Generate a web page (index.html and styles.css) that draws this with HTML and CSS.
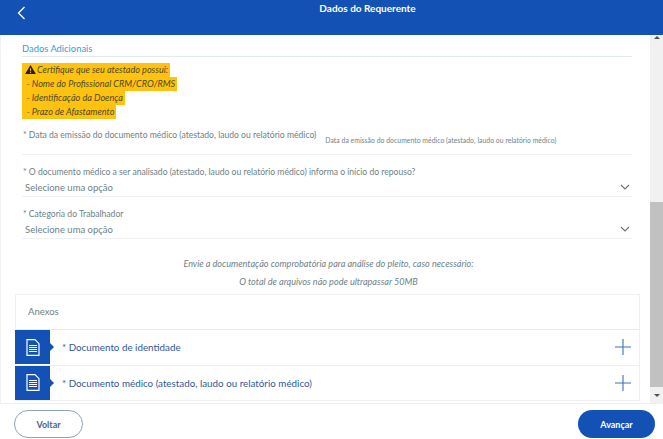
FILE: index.html
```html
<!DOCTYPE html>
<html lang="pt-BR">
<head>
<meta charset="utf-8">
<title>Dados do Requerente</title>
<link rel="stylesheet" href="styles.css">
</head>
<body>
<div class="app">
  <header class="topbar">
    <svg class="back" width="12" height="16" viewBox="0 0 12 16"><path d="M9.500 2 L3.500 8 L9.500 14" fill="none" stroke="#fff" stroke-width="1.300"/></svg>
    <h1 class="title">Dados do Requerente</h1>
  </header>
  <div class="middle">
    <main class="content">
      <div class="form">
        <h2 class="section">Dados Adicionais</h2>
        <div class="notice">
          <p class="line head-line"><svg class="warn" width="11" height="9" viewBox="0 0 12 10"><path d="M6 0 L12 10 L0 10 Z" fill="#222"/><rect x="5.500" y="3.500" width="1" height="3.500" fill="#ffc20e"/><rect x="5.500" y="7.800" width="1" height="1.100" fill="#ffc20e"/></svg>Certifique que seu atestado possui:</p>
          <p class="line">- Nome do Profissional CRM/CRO/RMS</p>
          <p class="line">- Identificação da Doença</p>
          <p class="line">- Prazo de Afastamento</p>
        </div>
        <div class="date-field">
          <span class="label">* Data da emissão do documento médico (atestado, laudo ou relatório médico)</span>
          <span class="hint">Data da emissão do documento médico (atestado, laudo ou relatório médico)</span>
        </div>
        <div class="select-field">
          <div class="label">* O documento médico a ser analisado (atestado, laudo ou relatório médico) informa o início do repouso?</div>
          <div class="select">Selecione uma opção
            <svg class="chev" width="10" height="6" viewBox="0 0 10 6"><path d="M1 1 L5 5 L9 1" fill="none" stroke="#66757c" stroke-width="1.100"/></svg>
          </div>
        </div>
        <div class="select-field">
          <div class="label">* Categoria do Trabalhador</div>
          <div class="select">Selecione uma opção
            <svg class="chev" width="10" height="6" viewBox="0 0 10 6"><path d="M1 1 L5 5 L9 1" fill="none" stroke="#66757c" stroke-width="1.100"/></svg>
          </div>
        </div>
      </div>
      <div class="info">
        <p>Envie a documentação comprobatória para análise do pleito, caso necessário:</p>
        <p>O total de arquivos não pode ultrapassar 50MB</p>
      </div>
      <section class="attachments">
        <div class="att-head">Anexos</div>
        <div class="att-row tall">
          <div class="att-icon">
            <svg width="14" height="17" viewBox="0 0 14 17"><path d="M1 .7 H9 L13 4.700 V16.300 H1 Z" fill="none" stroke="#fff" stroke-width="1.200"/><path d="M3 6.500 H11 M3 8.500 H11 M3 10.500 H11 M3 12.500 H11" stroke="#fff" stroke-width="1"/></svg>
          </div>
          <span class="att-name">* Documento de identidade</span>
          <svg class="plus" width="16" height="16" viewBox="0 0 16 16"><path d="M8 0 V16 M0 8 H16" stroke="#3f6fbe" stroke-width="1.100"/></svg>
        </div>
        <div class="att-row">
          <div class="att-icon">
            <svg width="14" height="17" viewBox="0 0 14 17"><path d="M1 .7 H9 L13 4.700 V16.300 H1 Z" fill="none" stroke="#fff" stroke-width="1.200"/><path d="M3 6.500 H11 M3 8.500 H11 M3 10.500 H11 M3 12.500 H11" stroke="#fff" stroke-width="1"/></svg>
          </div>
          <span class="att-name">* Documento médico (atestado, laudo ou relatório médico)</span>
          <svg class="plus" width="16" height="16" viewBox="0 0 16 16"><path d="M8 0 V16 M0 8 H16" stroke="#3f6fbe" stroke-width="1.100"/></svg>
        </div>
      </section>
    </main>
    <div class="scrollbar">
      <div class="arrow"><span class="tri up"></span></div>
      <div class="track"></div>
      <div class="thumb"></div>
      <div class="arrow"><span class="tri down"></span></div>
    </div>
  </div>
  <footer class="footer">
    <button class="btn ghost">Voltar</button>
    <button class="btn solid">Avançar</button>
  </footer>
</div>
</body>
</html>
```
FILE: styles.css
```css
* { box-sizing: border-box; }
html, body { margin: 0; padding: 0; height: 100%; overflow: hidden; background: #fff; }
body { font-family: Lato, "Open Sans", sans-serif; color: #6d7f85; }
.app { display: flex; flex-direction: column; height: 439px; }

.topbar { height: 35px; flex: none; background: #1351b4; position: relative; display: flex; justify-content: center; padding-left: 72px; }
.back { position: absolute; left: 15px; top: 5px; }
.title { margin: 1px 0 0; font-size: 10px; font-weight: 700; line-height: 14px; color: #fff; }

.middle { flex: 1; display: flex; min-height: 0; }
.content { flex: 1; min-width: 0; padding: 0 10px 0 5px; overflow: hidden; box-shadow: inset 1px 0 0 #f2f2f2; }

.form { padding: 0 8px 0 17px; }
.section { margin: 0; padding-top: 7px; height: 21.500px; font-size: 9.400px; line-height: 13px; font-weight: 400; color: #2f9fd0; border-bottom: 1px solid #e3ebef; }
.notice { margin-top: 6px; display: flex; flex-direction: column; align-items: flex-start; }
.line { margin: 0; padding: 0 2px 0 4.500px; background: #ffc20e; font-size: 9.100px; line-height: 14px; font-style: italic; color: #4d4a2a; white-space: nowrap; }
.head-line { padding-left: 3px; padding-right: 2px; }
.warn { margin: 0 1px -1px 0; }

.date-field { display: flex; align-items: flex-start; margin-top: 8px; height: 28px; border-bottom: 1px solid #eef1f2; white-space: nowrap; }
.date-field .label { padding-top: 2px; }
.hint { font-size: 6.800px; line-height: 11px; margin: 8px 0 0 9px; letter-spacing: .05px; color: #71838a; }

.select-field { margin-top: 11px; }
.label { font-size: 8.600px; line-height: 12px; white-space: nowrap; padding-left: 1px; }
.select { display: flex; justify-content: space-between; align-items: center; height: 17px; padding: 0 2px 1px 3px; font-size: 9.500px; border-bottom: 1px solid #eef0f1; margin-top: 2px; }

.info { margin-top: 16px; text-align: center; font-size: 9.100px; font-style: italic; line-height: 18px; color: #6d8188; padding-left: 12px; }
.info p { margin: 0; }

.attachments { margin: 3px 0 0 10px; border: 1px solid #f0f0f0; border-bottom: 0; }
.att-head { height: 35px; padding: 10px 0 0 12px; font-size: 9.500px; line-height: 14px; border-bottom: 1px solid #e9e9e9; }
.att-row { height: 35px; display: flex; align-items: center; border-bottom: 1px solid #efefef; }
.att-row.tall { height: 36px; }
.att-icon { width: 35px; height: 34px; margin-left: -1px; background: #1351b4; display: flex; align-items: center; justify-content: center; flex: none; position: relative; }
.att-icon::after { content: ""; position: absolute; left: 35px; top: 13px; border-left: 4px solid #1351b4; border-top: 4px solid transparent; border-bottom: 4px solid transparent; }
.att-name { margin-left: 12px; flex: 1; font-size: 9.800px; color: #31579c; white-space: nowrap; }
.plus { margin-right: 8px; flex: none; }

.scrollbar { width: 13px; flex: none; display: flex; flex-direction: column; background: #f1f1f1; }
.arrow { height: 16px; flex: none; display: flex; align-items: center; justify-content: center; }
.tri { width: 0; height: 0; border-left: 3px solid transparent; border-right: 3px solid transparent; }
.tri.up { border-bottom: 3px solid #505050; margin-bottom: 12px; }
.tri.down { border-top: 3px solid #505050; }
.track { height: 151px; flex: none; }
.thumb { flex: 1; background: #c1c1c1; }

.footer { height: 36px; flex: none; display: flex; justify-content: space-between; align-items: flex-start; padding: 6px 8px 0 14px; border-top: 1px solid #efefef; }
.btn { height: 28px; border-radius: 14px; font-family: inherit; font-size: 9px; font-weight: 700; padding: 0; }
.ghost { width: 69px; background: #fff; border: 1px solid #8fa3b8; color: #4a6688; }
.solid { width: 77px; background: #1351b4; border: 0; color: #fff; }
```
